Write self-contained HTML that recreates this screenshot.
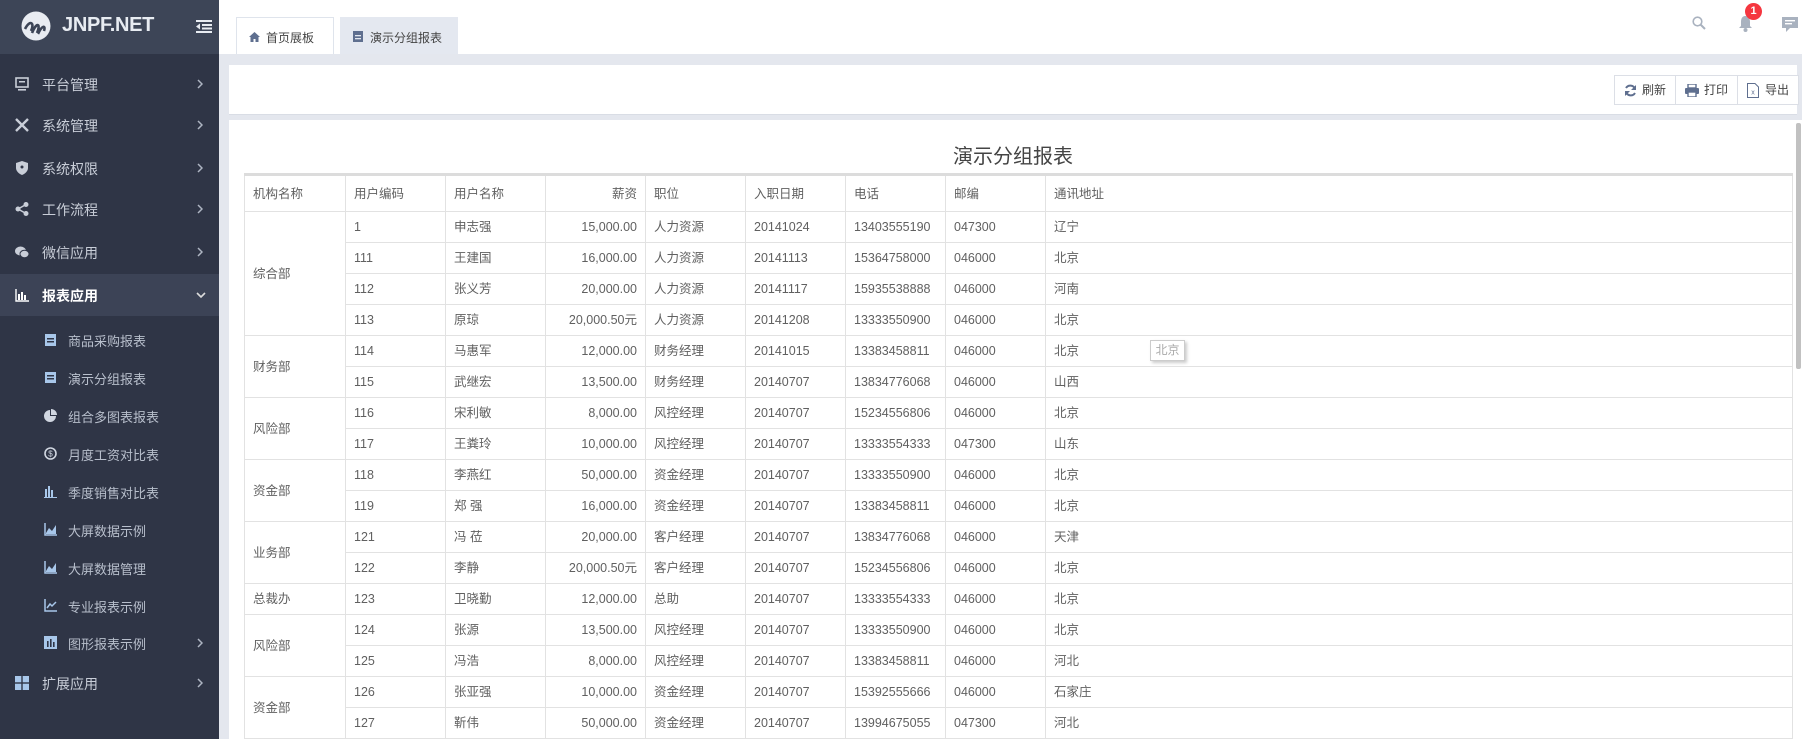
<!DOCTYPE html>
<html><head><meta charset="utf-8">
<style>
*{margin:0;padding:0;box-sizing:border-box}
body{width:1802px;height:739px;overflow:hidden;background:#e4e7ee;font-family:"Liberation Sans","Noto Sans CJK SC",sans-serif;position:relative}
.sb{position:absolute;left:0;top:0;width:219px;height:739px;background:#2f3546}
.logo{position:absolute;left:0;top:0;width:219px;height:54px;background:#3d4557}
.logo .t{position:absolute;left:62px;top:14px;color:#e8ecf2;font-weight:bold;font-size:20px;letter-spacing:-0.3px}
.mi{position:absolute;left:0;width:219px;height:42px;color:#c9ced8;font-size:14px}
.mi .tx{position:absolute;left:42px;top:12px}
.mi .ic{position:absolute;left:15px;top:14px;width:14px;height:14px}
.ch{position:absolute;left:197px;top:16px;width:6px;height:10px}
.si{position:absolute;left:0;width:219px;height:38px;color:#b8bfcc;font-size:13px}
.si .tx{position:absolute;left:68px;top:10px}
.si .ic{position:absolute;left:44px;top:12px;width:13px;height:13px}
.top{position:absolute;left:219px;top:0;width:1583px;height:54px;background:#fff}
.tab{position:absolute;top:17px;height:37px;font-size:12px;color:#444;border:1px solid #dfe4ec;border-bottom:none}
.band{position:absolute;left:219px;top:54px;width:1583px;height:11px;background:#e4e7ee}
.tool{position:absolute;left:229px;top:65px;width:1568px;height:50px;background:#fff;border-bottom:1px solid #d9dde5}
.btns{position:absolute;left:1614px;top:75px;width:185px;height:30px;border:1px solid #dcdfe6;background:#fff;font-size:12px;color:#444}
.btns div{position:absolute;top:0;height:28px;line-height:28px}
.main{position:absolute;left:229px;top:120px;width:1573px;height:619px;background:#fff;overflow:hidden}
.title{position:absolute;left:0;width:1568px;text-align:center;top:20px;font-size:20px;color:#444}
table{position:absolute;left:15px;top:53px;border-collapse:collapse;table-layout:fixed;width:1549px}
td{border:1px solid #e2e2e2;height:31px;line-height:16px;vertical-align:middle;padding:0 8px;font-size:12.5px;color:#606060;white-space:nowrap;overflow:hidden}
tr.h td{border-top:3px solid #dcdcdc;height:37px}
td.r{text-align:right}
</style></head><body>
<div class="sb">
 <div class="logo">
  <svg style="position:absolute;left:21px;top:11px" width="30" height="30" viewBox="0 0 30 30"><circle cx="15" cy="15" r="14.5" fill="#e9ecf2"/><path d="M4 18 C9 8 14 12 10 20 M11 22 C16 10 20 13 16 22 M17 23 C21 14 25 14 23 20" stroke="#3d4557" stroke-width="2.6" fill="none"/></svg>
  <div class="t">JNPF.NET</div>
  <svg style="position:absolute;left:196px;top:20px" width="16" height="13" viewBox="0 0 16 13"><rect x="0" y="0" width="16" height="2" fill="#e8ecf2"/><rect x="6" y="4" width="10" height="2" fill="#e8ecf2"/><rect x="6" y="7.5" width="10" height="2" fill="#e8ecf2"/><rect x="0" y="11" width="16" height="2" fill="#e8ecf2"/><path d="M0 6.5 L4 3.5 V9.5Z" fill="#e8ecf2"/></svg>
 </div>
 <div class="mi" style="top:63px"><svg class="ic" viewBox="0 0 14 14"><rect x="1" y="1" width="12" height="9" fill="none" stroke="#c9ced8" stroke-width="1.6"/><rect x="4" y="4" width="6" height="1.5" fill="#c9ced8"/><rect x="3" y="12" width="8" height="1.6" fill="#c9ced8"/></svg><span class="tx">平台管理</span><svg class="ch" viewBox="0 0 6 10"><path d="M1 1L5 5L1 9" stroke="#aeb5c2" stroke-width="1.5" fill="none"/></svg></div>
 <div class="mi" style="top:104px"><svg class="ic" viewBox="0 0 14 14"><path d="M1 1L13 13M13 1L1 13" stroke="#c9ced8" stroke-width="2.4"/></svg><span class="tx">系统管理</span><svg class="ch" viewBox="0 0 6 10"><path d="M1 1L5 5L1 9" stroke="#aeb5c2" stroke-width="1.5" fill="none"/></svg></div>
 <div class="mi" style="top:147px"><svg class="ic" viewBox="0 0 14 14"><path d="M7 0L13 2V7C13 10 10 13 7 14C4 13 1 10 1 7V2Z" fill="#c9ced8"/><circle cx="7" cy="6" r="1.5" fill="#2f3546"/></svg><span class="tx">系统权限</span><svg class="ch" viewBox="0 0 6 10"><path d="M1 1L5 5L1 9" stroke="#aeb5c2" stroke-width="1.5" fill="none"/></svg></div>
 <div class="mi" style="top:188px"><svg class="ic" viewBox="0 0 14 14"><circle cx="3" cy="7" r="2.5" fill="#c9ced8"/><circle cx="11" cy="2.5" r="2.5" fill="#c9ced8"/><circle cx="11" cy="11.5" r="2.5" fill="#c9ced8"/><path d="M3 7L11 2.5M3 7L11 11.5" stroke="#c9ced8" stroke-width="1.5"/></svg><span class="tx">工作流程</span><svg class="ch" viewBox="0 0 6 10"><path d="M1 1L5 5L1 9" stroke="#aeb5c2" stroke-width="1.5" fill="none"/></svg></div>
 <div class="mi" style="top:231px"><svg class="ic" viewBox="0 0 14 14"><ellipse cx="5.5" cy="6" rx="5.5" ry="4.5" fill="#c9ced8"/><ellipse cx="9.5" cy="9" rx="4.5" ry="3.8" fill="#c9ced8" stroke="#2f3546"/></svg><span class="tx">微信应用</span><svg class="ch" viewBox="0 0 6 10"><path d="M1 1L5 5L1 9" stroke="#aeb5c2" stroke-width="1.5" fill="none"/></svg></div>
 <div class="mi" style="top:274px;background:#3c4356;color:#fff;font-weight:bold"><svg class="ic" viewBox="0 0 14 14"><path d="M1 1V13H14" stroke="#fff" stroke-width="1.4" fill="none"/><rect x="3" y="6" width="2" height="6" fill="#fff"/><rect x="6" y="4" width="2" height="8" fill="#fff"/><rect x="9" y="7" width="2" height="5" fill="#fff"/></svg><span class="tx">报表应用</span><svg style="position:absolute;left:196px;top:18px" width="10" height="7" viewBox="0 0 10 7"><path d="M1 1L5 5L9 1" stroke="#ddd" stroke-width="1.6" fill="none"/></svg></div>
 <div class="si" style="top:321px"><svg class="ic" viewBox="0 0 13 13"><rect x="1" y="1" width="11" height="12" fill="#a8c7ea"/><rect x="3" y="5" width="7" height="1.5" fill="#2f3546"/><rect x="3" y="8" width="7" height="1.5" fill="#2f3546"/></svg><span class="tx">商品采购报表</span></div>
 <div class="si" style="top:359px"><svg class="ic" viewBox="0 0 13 13"><rect x="1" y="1" width="11" height="11" fill="#a8c7ea"/><rect x="3" y="4" width="7" height="1.5" fill="#2f3546"/><rect x="3" y="7" width="7" height="1.5" fill="#2f3546"/></svg><span class="tx">演示分组报表</span></div>
 <div class="si" style="top:397px"><svg class="ic" viewBox="0 0 13 13"><path d="M6 1A6 6 0 1 0 12 7H6Z" fill="#d0d6e0"/><path d="M7 0V6H13A6 6 0 0 0 7 0Z" fill="#d0d6e0"/></svg><span class="tx">组合多图表报表</span></div>
 <div class="si" style="top:435px"><svg class="ic" viewBox="0 0 13 13"><circle cx="6.5" cy="6.5" r="5.5" fill="none" stroke="#d0d6e0" stroke-width="1.6"/><text x="6.5" y="9.5" font-size="8" text-anchor="middle" fill="#d0d6e0">$</text></svg><span class="tx">月度工资对比表</span></div>
 <div class="si" style="top:473px"><svg class="ic" viewBox="0 0 13 13"><rect x="1" y="4" width="2" height="8" fill="#a8c7ea"/><rect x="4" y="1" width="2" height="11" fill="#a8c7ea"/><rect x="7" y="5" width="2" height="7" fill="#a8c7ea"/><rect x="0" y="12" width="13" height="1" fill="#a8c7ea"/></svg><span class="tx">季度销售对比表</span></div>
 <div class="si" style="top:511px"><svg class="ic" viewBox="0 0 13 13"><path d="M1 0V12H13" stroke="#a8c7ea" stroke-width="1.5" fill="none"/><path d="M2 10L5 5L8 8L12 2V11H2Z" fill="#a8c7ea"/></svg><span class="tx">大屏数据示例</span></div>
 <div class="si" style="top:549px"><svg class="ic" viewBox="0 0 13 13"><path d="M1 0V12H13" stroke="#a8c7ea" stroke-width="1.5" fill="none"/><path d="M2 10L5 5L8 8L12 2V11H2Z" fill="#a8c7ea"/></svg><span class="tx">大屏数据管理</span></div>
 <div class="si" style="top:587px"><svg class="ic" viewBox="0 0 13 13"><path d="M1 0V12H13" stroke="#a8c7ea" stroke-width="1.5" fill="none"/><path d="M3 9L6 5L8 7L12 3" stroke="#a8c7ea" stroke-width="1.5" fill="none"/></svg><span class="tx">专业报表示例</span></div>
 <div class="si" style="top:624px"><svg class="ic" viewBox="0 0 13 13"><rect x="0" y="0" width="13" height="13" fill="#a8c7ea"/><rect x="3" y="5" width="1.6" height="6" fill="#2f3546"/><rect x="6" y="3" width="1.6" height="8" fill="#2f3546"/><rect x="9" y="6" width="1.6" height="5" fill="#2f3546"/></svg><span class="tx">图形报表示例</span><svg class="ch" style="top:14px" viewBox="0 0 6 10"><path d="M1 1L5 5L1 9" stroke="#aeb5c2" stroke-width="1.5" fill="none"/></svg></div>
 <div class="mi" style="top:662px"><svg class="ic" viewBox="0 0 14 14"><rect x="0" y="0" width="6.3" height="6.3" fill="#a8c7ea"/><rect x="7.7" y="0" width="6.3" height="6.3" fill="#a8c7ea"/><rect x="0" y="7.7" width="6.3" height="6.3" fill="#a8c7ea"/><rect x="7.7" y="7.7" width="6.3" height="6.3" fill="#a8c7ea"/></svg><span class="tx">扩展应用</span><svg class="ch" viewBox="0 0 6 10"><path d="M1 1L5 5L1 9" stroke="#aeb5c2" stroke-width="1.5" fill="none"/></svg></div>
</div>

<div class="top">
 <div class="tab" style="left:17px;width:98px;background:#fff"><svg style="position:absolute;left:12px;top:14px" width="11" height="10" viewBox="0 0 11 10"><path d="M5.5 0L11 5H9.5V10H6.5V7H4.5V10H1.5V5H0Z" fill="#5f6f8f"/></svg><span style="position:absolute;left:29px;top:11px">首页展板</span></div>
 <div class="tab" style="left:121px;width:118px;background:#e4e8f0;border-color:#e4e8f0"><svg style="position:absolute;left:12px;top:13px" width="10" height="11" viewBox="0 0 10 11"><rect width="10" height="11" fill="#5f6f8f"/><rect x="2" y="4" width="6" height="1.3" fill="#e4e8f0"/><rect x="2" y="7" width="6" height="1.3" fill="#e4e8f0"/></svg><span style="position:absolute;left:29px;top:11px">演示分组报表</span></div>
 <svg style="position:absolute;left:1473px;top:16px" width="14" height="14" viewBox="0 0 14 14"><circle cx="5.5" cy="5.5" r="4.3" fill="none" stroke="#a9b2bf" stroke-width="1.6"/><path d="M8.5 8.5L13 13" stroke="#a9b2bf" stroke-width="2"/></svg>
 <svg style="position:absolute;left:1519px;top:15px" width="15" height="17" viewBox="0 0 15 17"><path d="M7.5 1C4 1 3 4 3 7V11L1 13H14L12 11V7C12 4 11 1 7.5 1Z" fill="#a9b2bf"/><circle cx="7.5" cy="15" r="2" fill="#a9b2bf"/></svg>
 <div style="position:absolute;left:1526px;top:3px;width:17px;height:17px;border-radius:50%;background:#f5363f;color:#fff;font-size:11px;font-weight:bold;text-align:center;line-height:17px">1</div>
 <svg style="position:absolute;left:1563px;top:17px" width="16" height="16" viewBox="0 0 16 16"><path d="M0 0H16V11H8L4 15V11H0Z" fill="#a9b2bf"/><rect x="3" y="3" width="10" height="1.4" fill="#fff"/><rect x="3" y="6" width="7" height="1.4" fill="#fff"/></svg>
</div>
<div class="band"></div>
<div class="tool"></div>
<div class="btns">
 <div style="left:0;width:61px;border-right:1px solid #dcdfe6"><svg style="position:absolute;left:9px;top:8px" width="13" height="13" viewBox="0 0 13 13"><path d="M11 5A5 5 0 0 0 2 4M2 8A5 5 0 0 0 11 9" stroke="#5f6f8f" stroke-width="2" fill="none"/><path d="M12 1V6H7Z M1 12V7H6Z" fill="#5f6f8f"/></svg><span style="position:absolute;left:27px">刷新</span></div>
 <div style="left:61px;width:62px;border-right:1px solid #dcdfe6"><svg style="position:absolute;left:9px;top:8px" width="14" height="13" viewBox="0 0 14 13"><rect x="3" y="0" width="8" height="4" fill="none" stroke="#5f6f8f" stroke-width="1.4"/><rect x="0" y="4" width="14" height="6" rx="1" fill="#5f6f8f"/><rect x="3" y="8" width="8" height="5" fill="#fff" stroke="#5f6f8f" stroke-width="1.4"/></svg><span style="position:absolute;left:28px">打印</span></div>
 <div style="left:123px;width:60px"><svg style="position:absolute;left:9px;top:7px" width="12" height="15" viewBox="0 0 12 15"><path d="M0.5 0.5H8L11.5 4V14.5H0.5Z" fill="none" stroke="#5f6f8f"/><text x="6" y="11.5" font-size="7" text-anchor="middle" fill="#5f6f8f">x</text></svg><span style="position:absolute;left:27px">导出</span></div>
</div>

<div class="main">
 <div class="title">演示分组报表</div>
 <table>
 <colgroup><col style="width:101px"><col style="width:100px"><col style="width:100px"><col style="width:100px"><col style="width:100px"><col style="width:100px"><col style="width:100px"><col style="width:100px"><col></colgroup>
 <tr class="h"><td>机构名称</td><td>用户编码</td><td>用户名称</td><td class="r">薪资</td><td>职位</td><td>入职日期</td><td>电话</td><td>邮编</td><td>通讯地址</td></tr>
 <tr><td rowspan="4">综合部</td><td>1</td><td>申志强</td><td class="r">15,000.00</td><td>人力资源</td><td>20141024</td><td>13403555190</td><td>047300</td><td>辽宁</td></tr>
 <tr><td>111</td><td>王建国</td><td class="r">16,000.00</td><td>人力资源</td><td>20141113</td><td>15364758000</td><td>046000</td><td>北京</td></tr>
 <tr><td>112</td><td>张义芳</td><td class="r">20,000.00</td><td>人力资源</td><td>20141117</td><td>15935538888</td><td>046000</td><td>河南</td></tr>
 <tr><td>113</td><td>原琼</td><td class="r">20,000.50元</td><td>人力资源</td><td>20141208</td><td>13333550900</td><td>046000</td><td>北京</td></tr>
 <tr><td rowspan="2">财务部</td><td>114</td><td>马惠军</td><td class="r">12,000.00</td><td>财务经理</td><td>20141015</td><td>13383458811</td><td>046000</td><td>北京</td></tr>
 <tr><td>115</td><td>武继宏</td><td class="r">13,500.00</td><td>财务经理</td><td>20140707</td><td>13834776068</td><td>046000</td><td>山西</td></tr>
 <tr><td rowspan="2">风险部</td><td>116</td><td>宋利敏</td><td class="r">8,000.00</td><td>风控经理</td><td>20140707</td><td>15234556806</td><td>046000</td><td>北京</td></tr>
 <tr><td>117</td><td>王粪玲</td><td class="r">10,000.00</td><td>风控经理</td><td>20140707</td><td>13333554333</td><td>047300</td><td>山东</td></tr>
 <tr><td rowspan="2">资金部</td><td>118</td><td>李燕红</td><td class="r">50,000.00</td><td>资金经理</td><td>20140707</td><td>13333550900</td><td>046000</td><td>北京</td></tr>
 <tr><td>119</td><td>郑 强</td><td class="r">16,000.00</td><td>资金经理</td><td>20140707</td><td>13383458811</td><td>046000</td><td>北京</td></tr>
 <tr><td rowspan="2">业务部</td><td>121</td><td>冯 莅</td><td class="r">20,000.00</td><td>客户经理</td><td>20140707</td><td>13834776068</td><td>046000</td><td>天津</td></tr>
 <tr><td>122</td><td>李静</td><td class="r">20,000.50元</td><td>客户经理</td><td>20140707</td><td>15234556806</td><td>046000</td><td>北京</td></tr>
 <tr><td>总裁办</td><td>123</td><td>卫晓勤</td><td class="r">12,000.00</td><td>总助</td><td>20140707</td><td>13333554333</td><td>046000</td><td>北京</td></tr>
 <tr><td rowspan="2">风险部</td><td>124</td><td>张源</td><td class="r">13,500.00</td><td>风控经理</td><td>20140707</td><td>13333550900</td><td>046000</td><td>北京</td></tr>
 <tr><td>125</td><td>冯浩</td><td class="r">8,000.00</td><td>风控经理</td><td>20140707</td><td>13383458811</td><td>046000</td><td>河北</td></tr>
 <tr><td rowspan="2">资金部</td><td>126</td><td>张亚强</td><td class="r">10,000.00</td><td>资金经理</td><td>20140707</td><td>15392555666</td><td>046000</td><td>石家庄</td></tr>
 <tr><td>127</td><td>靳伟</td><td class="r">50,000.00</td><td>资金经理</td><td>20140707</td><td>13994675055</td><td>047300</td><td>河北</td></tr>
 <tr><td></td><td></td><td></td><td></td><td></td><td></td><td></td><td></td><td></td></tr>
 </table>
 <div style="position:absolute;left:921px;top:220px;width:35px;height:21px;border:1px solid #ccc;background:#fff;box-shadow:2px 2px 3px #ccc;font-size:12px;color:#aaa;text-align:center;line-height:19px">北京</div>
 <div style="position:absolute;left:1567px;top:3px;width:5px;height:246px;background:#c1c1c1;border-radius:2px"></div>
</div>
</body></html>
